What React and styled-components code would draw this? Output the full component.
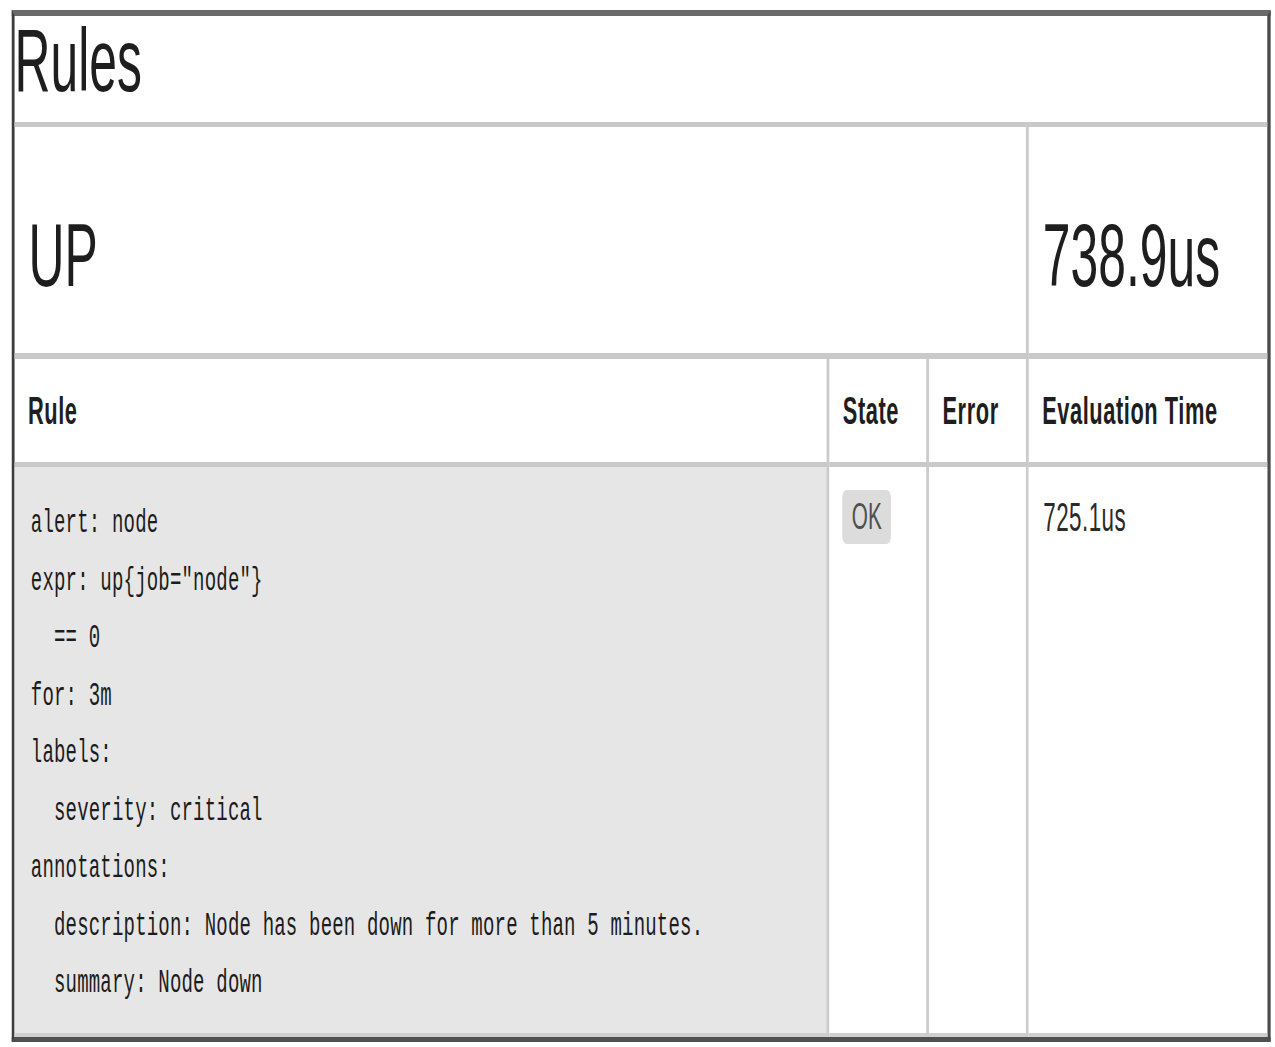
import React from 'react';
import styled, { createGlobalStyle } from 'styled-components';

// the reference is squeezed sideways, so the page is laid out wide and scaled on x
const SQUEEZE = 0.56;

const Global = createGlobalStyle`
  html, body {
    margin: 0;
    padding: 0;
    background: #fff;
    overflow: hidden;
  }
  body {
    font-family: "Liberation Sans", Arial, sans-serif;
    color: #222;
  }
`;

const Stretch = styled.div`
  width: ${Math.round(1275 / SQUEEZE)}px;
  transform: scaleX(${SQUEEZE});
  transform-origin: 0 0;
  padding-top: 10px;
  padding-left: 21px;
  box-sizing: border-box;
`;

const Frame = styled.div`
  width: 2248px;
  box-sizing: border-box;
  border-top: 6px solid #6a6a6a;
  border-left: 5px solid #3c3c3c;
  border-right: 6px solid #4a4a4a;
  border-bottom: 5px solid #505050;
  display: grid;
  grid-template-columns: 1455px 178px 178px 1fr;
`;

const Title = styled.h1`
  grid-column: 1 / -1;
  margin: 0;
  height: 111px;
  box-sizing: border-box;
  border-bottom: 5px solid #c9c9c9;
  font-size: 89px;
  line-height: 89px;
  font-weight: normal;
  color: #1e1e1e;
`;

const Big = styled.div`
  grid-column: ${(p) => (p.$wide ? '1 / 4' : 'auto')};
  height: 232px;
  box-sizing: border-box;
  border-bottom: 6px solid #c9c9c9;
  border-right: ${(p) => (p.$wide ? '5px solid #cbcbcb' : 'none')};
  padding: 84px 0 0 25px;
  font-size: 89px;
  line-height: 89px;
  color: #1e1e1e;
`;

const Head = styled.div`
  height: 108px;
  box-sizing: border-box;
  border-bottom: 5px solid #c9c9c9;
  border-right: ${(p) => (p.$last ? 'none' : '5px solid #cbcbcb')};
  display: flex;
  align-items: center;
  padding-left: 24px;
  font-size: 39px;
  font-weight: bold;
  letter-spacing: 1px;
  color: #1e1e1e;
  white-space: nowrap;
`;

const Cell = styled.div`
  height: 570px;
  box-sizing: border-box;
  border-bottom: 4px solid #cfcfcf;
  border-right: ${(p) => (p.$last ? 'none' : '5px solid #cbcbcb')};
  background: ${(p) => (p.$shade ? '#e6e6e6' : '#fff')};
  padding: ${(p) => (p.$shade ? '0 0 0 29px' : '23px 0 0 23px')};
`;

const Code = styled.pre`
  margin: 0;
  padding-top: 28px;
  font-family: "Liberation Mono", "Courier New", monospace;
  font-size: 34px;
  line-height: 57.5px;
  letter-spacing: 0.3px;
  color: #1c1c1c;
  white-space: pre;
`;

const Badge = styled.span`
  display: inline-block;
  height: 54px;
  line-height: 54px;
  padding: 0 17px;
  border-radius: 8px;
  background: #dcdcdc;
  color: #505050;
  font-size: 37px;
`;

const Duration = styled.div`
  padding: 7px 0 0 3px;
  font-size: 40px;
  line-height: 40px;
  letter-spacing: 0.8px;
  color: #2a2a2a;
`;

const rule = `alert: node
expr: up{job="node"}
  == 0
for: 3m
labels:
  severity: critical
annotations:
  description: Node has been down for more than 5 minutes.
  summary: Node down`;

export default function App() {
  return (
    <>
      <Global />
      <Stretch>
        <Frame>
          <Title>Rules</Title>

          <Big $wide>UP</Big>
          <Big>738.9us</Big>

          <Head>Rule</Head>
          <Head>State</Head>
          <Head>Error</Head>
          <Head $last>Evaluation Time</Head>

          <Cell $shade>
            <Code>{rule}</Code>
          </Cell>
          <Cell>
            <Badge>OK</Badge>
          </Cell>
          <Cell />
          <Cell $last>
            <Duration>725.1us</Duration>
          </Cell>
        </Frame>
      </Stretch>
    </>
  );
}
